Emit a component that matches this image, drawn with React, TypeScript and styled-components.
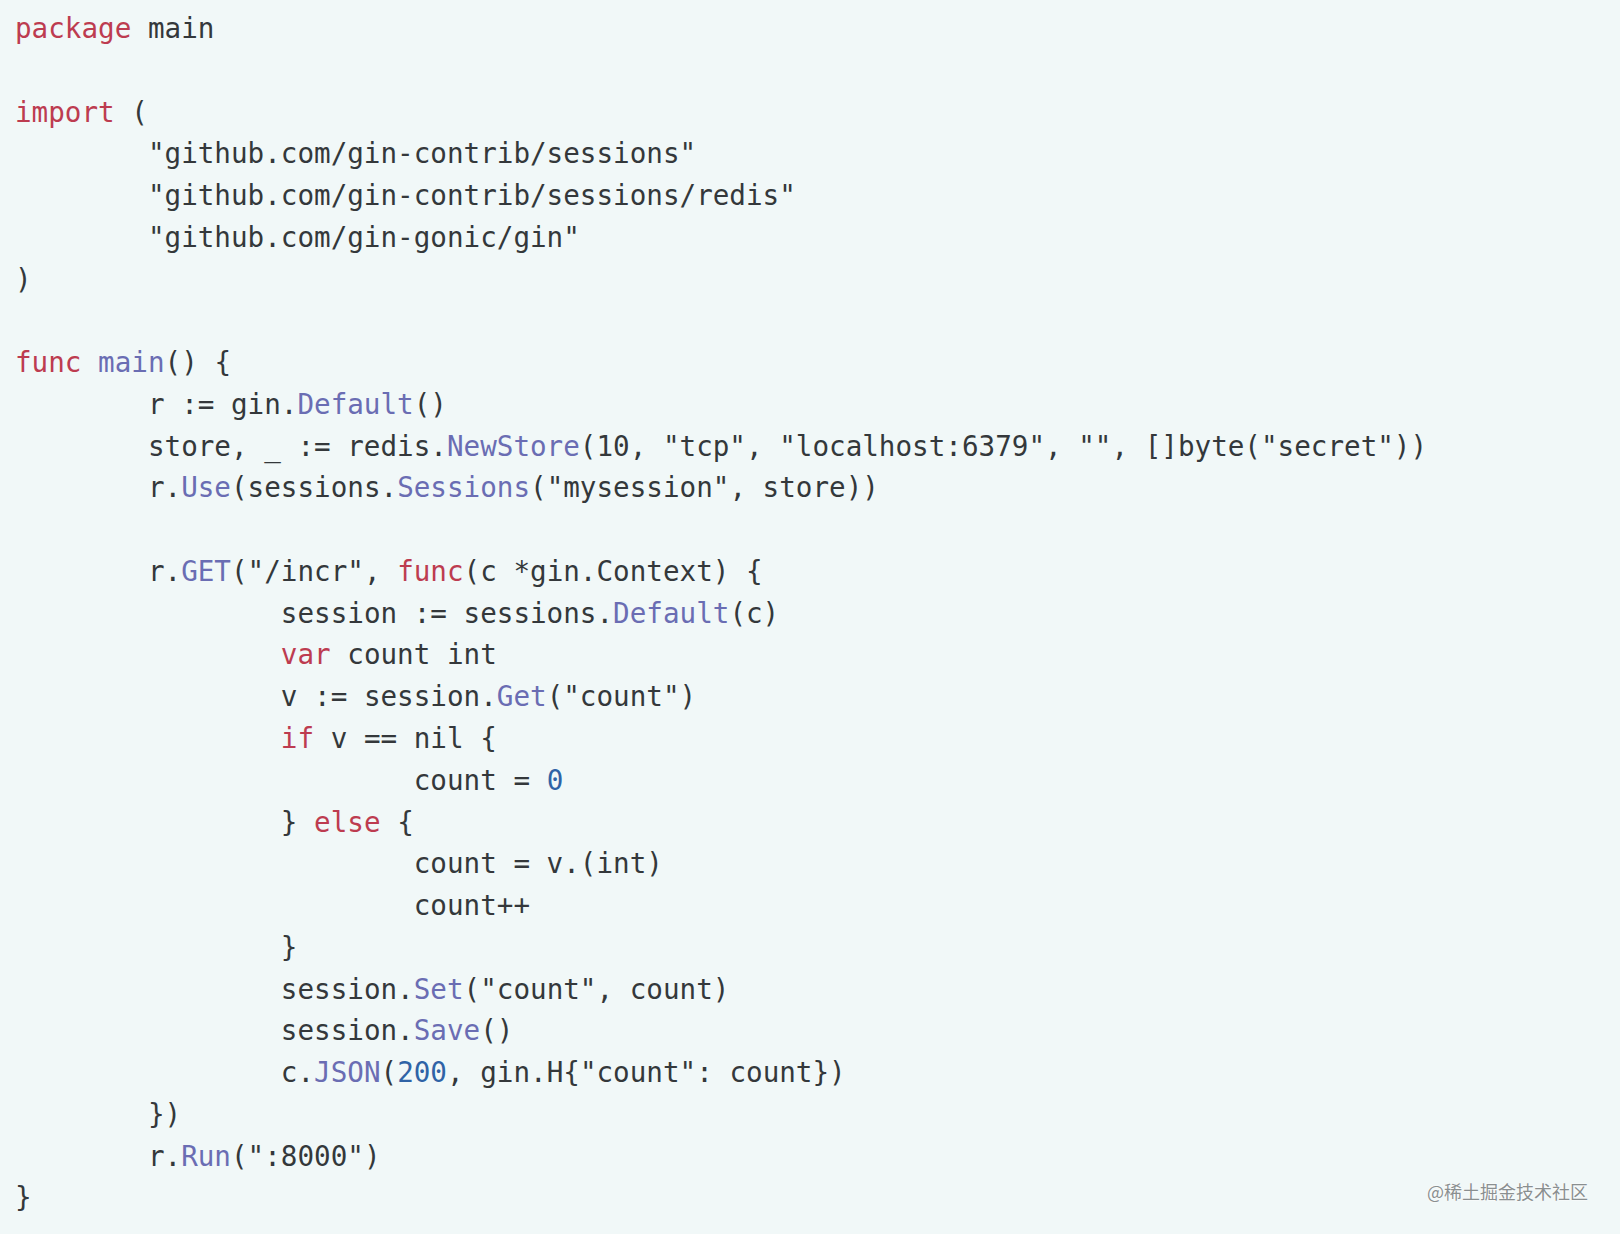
import React from "react";
import styled, { createGlobalStyle } from "styled-components";

const Global = createGlobalStyle`
  html, body { margin: 0; padding: 0; background: #f1f8f8; }
  #root { min-height: 100vh; }
`;

const Page = styled.div`
  position: relative;
  height: 100vh;
  overflow: hidden;
  background: #f1f8f8;
  box-sizing: border-box;
  padding: 8px 0 0 15px;
`;

const Code = styled.pre`
  margin: 0;
  font-family: "DejaVu Sans Mono", "Liberation Mono", monospace;
  font-size: 27.6px;
  line-height: 41.77px;
  color: #34383b;
  tab-size: 8;
  -moz-tab-size: 8;
  white-space: pre;
`;

const Line = styled.div`
  height: 41.77px;
`;

const Kw = styled.span`
  color: #bd3c50;
`;

const Fn = styled.span`
  color: #6a6db3;
`;

const Num = styled.span`
  color: #2f63a6;
`;

const Watermark = styled.div`
  position: absolute;
  right: 32px;
  bottom: 30px;
  font-family: "Noto Sans CJK SC", "Noto Sans", sans-serif;
  font-size: 18px;
  color: #8a8f90;
  text-shadow: 0 0 2px #ffffff, 0 0 2px #ffffff;
`;

const T = "\t";

export default function App() {
  return (
    <>
      <Global />
      <Page>
        <Code>
          <Line><Kw>package</Kw> main</Line>
          <Line />
          <Line><Kw>import</Kw> (</Line>
          <Line>{T}"github.com/gin-contrib/sessions"</Line>
          <Line>{T}"github.com/gin-contrib/sessions/redis"</Line>
          <Line>{T}"github.com/gin-gonic/gin"</Line>
          <Line>)</Line>
          <Line />
          <Line><Kw>func</Kw> <Fn>main</Fn>() {"{"}</Line>
          <Line>{T}r := gin.<Fn>Default</Fn>()</Line>
          <Line>{T}store, _ := redis.<Fn>NewStore</Fn>(10, "tcp", "localhost:6379", "", []byte("secret"))</Line>
          <Line>{T}r.<Fn>Use</Fn>(sessions.<Fn>Sessions</Fn>("mysession", store))</Line>
          <Line />
          <Line>{T}r.<Fn>GET</Fn>("/incr", <Kw>func</Kw>(c *gin.Context) {"{"}</Line>
          <Line>{T}{T}session := sessions.<Fn>Default</Fn>(c)</Line>
          <Line>{T}{T}<Kw>var</Kw> count int</Line>
          <Line>{T}{T}v := session.<Fn>Get</Fn>("count")</Line>
          <Line>{T}{T}<Kw>if</Kw> v == nil {"{"}</Line>
          <Line>{T}{T}{T}count = <Num>0</Num></Line>
          <Line>{T}{T}{"}"} <Kw>else</Kw> {"{"}</Line>
          <Line>{T}{T}{T}count = v.(int)</Line>
          <Line>{T}{T}{T}count++</Line>
          <Line>{T}{T}{"}"}</Line>
          <Line>{T}{T}session.<Fn>Set</Fn>("count", count)</Line>
          <Line>{T}{T}session.<Fn>Save</Fn>()</Line>
          <Line>{T}{T}c.<Fn>JSON</Fn>(<Num>200</Num>, gin.H{"{"}"count": count{"}"})</Line>
          <Line>{T}{"})"}</Line>
          <Line>{T}r.<Fn>Run</Fn>(":8000")</Line>
          <Line>{"}"}</Line>
        </Code>
        <Watermark>@稀土掘金技术社区</Watermark>
      </Page>
    </>
  );
}
